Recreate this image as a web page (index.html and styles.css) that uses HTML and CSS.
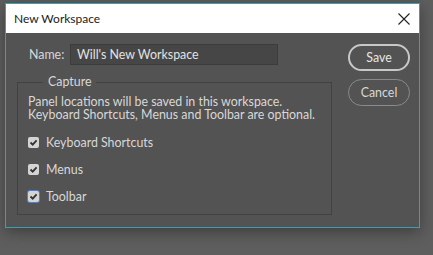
FILE: index.html
```html
<!DOCTYPE html>
<html lang="en">
<head>
    <meta charset="UTF-8">
    <title>New Workspace</title>
    <link rel="stylesheet" href="styles.css">
</head>
<body>
    <div class="dialog">
        <header class="titlebar">
            <span class="title">New Workspace</span>
            <svg class="close" width="12" height="12" viewBox="0 0 12 12">
                <path d="M0.5 0.5 L11.5 11.5 M11.5 0.5 L0.5 11.5" stroke="#222" stroke-width="1.1" fill="none"/>
            </svg>
        </header>

        <div class="content">
            <div class="main">
                <div class="name-row">
                    <label for="ws-name">Name:</label>
                    <div class="input" id="ws-name">Will's New Workspace</div>
                </div>

                <fieldset class="capture">
                    <legend>Capture</legend>
                    <p>Panel locations will be saved in this workspace.<br>Keyboard Shortcuts, Menus and Toolbar are optional.</p>
                    <div class="check">
                        <span class="box"><svg width="9" height="9" viewBox="0 0 9 9"><path d="M1.5 4.5 L3.7 6.7 L7.6 2.3" stroke="#333" stroke-width="1.8" fill="none"/></svg></span>
                        <span>Keyboard Shortcuts</span>
                    </div>
                    <div class="check">
                        <span class="box"><svg width="9" height="9" viewBox="0 0 9 9"><path d="M1.5 4.5 L3.7 6.7 L7.6 2.3" stroke="#333" stroke-width="1.8" fill="none"/></svg></span>
                        <span>Menus</span>
                    </div>
                    <div class="check">
                        <span class="box focus"><svg width="9" height="9" viewBox="0 0 9 9"><path d="M1.5 4.5 L3.7 6.7 L7.6 2.3" stroke="#333" stroke-width="1.8" fill="none"/></svg></span>
                        <span>Toolbar</span>
                    </div>
                </fieldset>
            </div>

            <div class="buttons">
                <button class="btn primary">Save</button>
                <button class="btn">Cancel</button>
            </div>
        </div>
    </div>
</body>
</html>
```

FILE: styles.css
```css
* {
    margin: 0;
    padding: 0;
    box-sizing: border-box;
}

body {
    background: #5e5e5e;
    font-family: 'Lato', 'Noto Sans', sans-serif;
    font-size: 12.4px;
    color: #d8d8d8;
    padding: 3px 0 0 5px;
    height: 255px;
    overflow: hidden;
}

.dialog {
    width: 415px;
    height: 225px;
    background: #535353;
    border: 1px solid #3d9db3;
    box-shadow: 0 4px 14px rgba(0,0,0,.35);
    display: flex;
    flex-direction: column;
}

.titlebar {
    height: 29px;
    background: #fff;
    display: flex;
    align-items: center;
    justify-content: space-between;
    padding: 0 9px 0 8px;
}

.title {
    color: #1b1b1b;
    font-size: 12px;
}

.content {
    display: flex;
    padding: 11px 0 0 11px;
}

.main {
    width: 315px;
}

.name-row {
    display: flex;
    align-items: center;
    padding-left: 12px;
    height: 21px;
}

.name-row label {
    width: 41px;
}

.input {
    width: 208px;
    height: 21px;
    background: #464646;
    border: 1px solid #3c3c3c;
    padding: 0 6px;
    line-height: 19px;
    color: #e2e2e2;
}

.capture {
    margin-top: 10px;
    border: 1px solid #424242;
    height: 140px;
    padding: 6px 10px 0 10px;
}

.capture legend {
    margin-left: 15px;
    padding: 0 5px;
    line-height: 14px;
}

.capture p {
    line-height: 13px;
    margin-bottom: 8px;
    white-space: nowrap;
}

.check {
    display: flex;
    align-items: center;
    height: 27px;
    gap: 7px;
}

.box {
    width: 11px;
    height: 11px;
    background: #d4d4d4;
    border-radius: 2px;
    display: flex;
    align-items: center;
    justify-content: center;
}

.box.focus {
    box-shadow: 0 0 0 1px #4d7fd6;
}

.buttons {
    margin-left: 16px;
    display: flex;
    flex-direction: column;
    gap: 8px;
}

.btn {
    width: 62px;
    height: 27px;
    border-radius: 14px;
    background: transparent;
    border: 1px solid #8a8a8a;
    color: #d8d8d8;
    font-family: inherit;
    font-size: 12.4px;
}

.btn.primary {
    border: 2px solid #c8c8c8;
    color: #e6e6e6;
}
```
